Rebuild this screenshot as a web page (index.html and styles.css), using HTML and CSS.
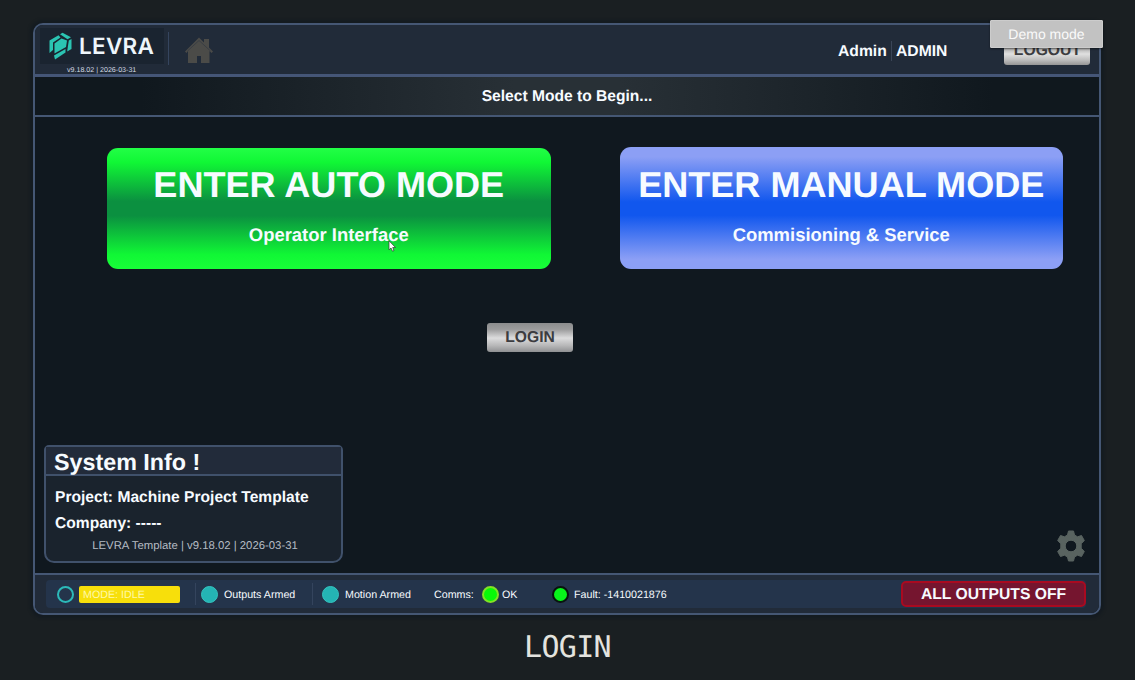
FILE: index.html
```html
<!DOCTYPE html>
<html lang="en">
<head>
<meta charset="utf-8">
<title>LEVRA</title>
<link rel="stylesheet" href="styles.css">
</head>
<body>
<div class="screen">
  <div class="frame">
    <header class="header">
      <div class="brand">
        <div class="brand-logo">
          <svg class="brand-mark" width="24" height="28" viewBox="0 0 24 28">
            <g fill="#2bc4b2">
              <path d="M.500 8.500 9.500 3.200 11.500 5.500 4 10.500V18L.500 21Z"/>
              <path d="M11 2.300 13.500 .800 22 5.200 18.500 7.200Z"/>
              <path d="M12.500 6.500 18 8.500 17 15 5.500 21.500V11.500Z"/>
              <path d="M19.800 8.500 22.500 7V17L18.200 19.500 18.800 15Z"/>
              <path d="M5 23.500 16.500 17V20.500L6 27.500Z"/>
            </g>
          </svg>
          <span class="brand-name">LEVRA</span>
        </div>
        <div class="brand-version">v9.18.02 | 2026-03-31</div>
      </div>
      <div class="divider"></div>
      <svg class="home" width="28" height="27" viewBox="0 0 28 27">
        <path fill="#4b4b48" d="M14 .500 19 5.500V2H24V10.500L28 14.500 26.500 16 24.500 14V26H16V19H12V26H3V14L1.500 16 0 14.500Z"/>
        <path fill="none" stroke="#343a42" stroke-width=".8" d="M2.500 14 14 3.500 25.500 14"/>
      </svg>
      <div class="user">
        <span class="user-name">Admin</span>
        <span class="user-role">ADMIN</span>
      </div>
      <button class="metal logout">LOGOUT</button>
    </header>
    <div class="titlebar">Select Mode to Begin...</div>
    <main class="main">
      <div class="modes">
        <button class="mode mode-auto">
          <span class="mode-title">ENTER AUTO MODE</span>
          <span class="mode-sub">Operator Interface</span>
        </button>
        <button class="mode mode-manual">
          <span class="mode-title">ENTER MANUAL MODE</span>
          <span class="mode-sub">Commisioning &amp; Service</span>
        </button>
      </div>
      <button class="metal login">LOGIN</button>
      <div class="bottom">
        <section class="info">
          <h2 class="info-head">System Info !</h2>
          <p class="info-line">Project: Machine Project Template</p>
          <p class="info-line info-company">Company: -----</p>
          <p class="info-version">LEVRA Template | v9.18.02 | 2026-03-31</p>
        </section>
        <svg class="gear" width="28" height="32" viewBox="0 0 28 32">
          <path fill="#596360" stroke="#596360" stroke-linejoin="round" fill-rule="evenodd" d="M11.500 1H16.500L17.500 5 20.500 6.800 24.500 5.500 27.300 10.500 24.200 13.800V18.200L27.300 21.500 24.500 26.500 20.500 25.200 17.500 27 16.500 31H11.500L10.500 27 7.500 25.200 3.500 26.500 .700 21.500 3.800 18.200V13.800L.700 10.500 3.500 5.500 7.500 6.800 10.500 5ZM14 10.200A5.800 5.800 0 1 0 14 21.800 5.800 5.800 0 1 0 14 10.200Z"/>
        </svg>
      </div>
    </main>
    <footer class="footer">
      <div class="status">
        <span class="lamp lamp-idle"></span>
        <span class="mode-tag">MODE: IDLE</span>
        <span class="sep"></span>
        <span class="lamp lamp-on"></span>
        <span class="label outputs">Outputs Armed</span>
        <span class="sep"></span>
        <span class="lamp lamp-on lamp-motion"></span>
        <span class="label motion">Motion Armed</span>
        <span class="label comms">Comms:</span>
        <span class="lamp lamp-comms"></span>
        <span class="label ok">OK</span>
        <span class="lamp lamp-fault"></span>
        <span class="label fault">Fault: -1410021876</span>
        <button class="outputs-off">ALL OUTPUTS OFF</button>
      </div>
    </footer>
  </div>
  <div class="caption">LOGIN</div>
  <div class="demo">Demo mode</div>
  <svg class="cursor" width="8" height="12" viewBox="0 0 8 12">
    <path fill="#fff" stroke="#333" stroke-width=".7" d="M1 .800V9.800L3 8 4.500 11.200 6 10.500 4.700 7.500H7.500Z"/>
  </svg>
</div>
</body>
</html>
```
FILE: styles.css
```css
* { box-sizing: border-box; }
body {
  margin: 0;
  background: #1a1f22;
  color: #f7fbff;
  font-family: "Liberation Sans", Arial, sans-serif;
  text-rendering: geometricPrecision;
}
button { border: 0; padding: 0; font: inherit; color: inherit; text-rendering: inherit; }
.screen { position: relative; width: 1135px; height: 680px; padding: 23px 0 0 33px; overflow: hidden; }
.frame {
  width: 1068px;
  height: 592px;
  display: flex;
  flex-direction: column;
  border: 2px solid #455774;
  border-radius: 10px;
  background: #10181f;
  box-shadow: 0 0 3px 3px #141b21;
}
.header {
  flex: none;
  display: flex;
  height: 52px;
  padding-left: 5px;
  background: #212b39;
  border-bottom: 3px solid #455677;
  border-radius: 8px 8px 0 0;
}
.brand { width: 124px; padding-top: 3px; }
.brand-logo { display: flex; align-items: center; height: 36px; background: #1a2430; padding-left: 9px; }
.brand-mark { margin-top: -1px; }
.brand-name { margin-left: 6px; padding-top: 1px; font: 600 22.500px/36px Inter, sans-serif; letter-spacing: .300px; color: #eef6fb; }
.brand-version { margin: 1px 0 0 27px; font-size: 7.100px; line-height: 11px; white-space: nowrap; color: #d5dce5; }
.divider { width: 1px; height: 33px; margin: 7px 0 0 4px; background: #35455e; }
.home { margin: 12px 0 0 16px; }
.user { display: flex; margin: 16px 0 0 625px; height: 20px; font-weight: bold; font-size: 15.700px; line-height: 21px; }
.user-name { width: 54px; border-right: 1px solid #3a4557; }
.user-role { margin-left: 4px; }
.metal {
  border-radius: 3px;
  color: #3c3c40;
  font-weight: bold;
  font-size: 15.700px;
  padding-top: 1px;
  background: linear-gradient(#8b8c8d, #9b9b9c 22%, #dcdcdd 52%, #b7b7b8 78%, #8f9092);
}
.logout { width: 86px; height: 29px; margin: 11px 0 0 57px; background: linear-gradient(#999, #aaa 40%, #e0e0e0 62%, #bebebe 82%, #959595); }
.titlebar {
  flex: none;
  width: 1066px;
  height: 40px;
  border: solid #455774;
  border-width: 0 2px 2px 0;
  background: linear-gradient(90deg, #10181e 10%, #283036 45%, #283036 55%, #10181e 90%);
  text-align: center;
  font-weight: bold;
  font-size: 15.600px;
  line-height: 40px;
}
.main { flex: 1; display: flex; flex-direction: column; padding: 29.500px 14px 9px 9px; }
.modes { display: flex; height: 123px; gap: 69px; padding-left: 63px; }
.mode { width: 443.500px; height: 122px; border-radius: 11px; display: flex; flex-direction: column; align-items: center; }
.mode-auto { height: 121px; margin-top: 1.500px; background: linear-gradient(#22ff46, #10f735 12%, #0b9040 44%, #0b9040 56%, #10f735 88%, #18ff38); }
.mode-manual { background: linear-gradient(#8c9ff5 8%, #1157ee 45%, #1157ee 56%, #8c9ff5 92%); }
.mode-title { margin-top: 17px; font-weight: bold; font-size: 36.100px; line-height: 42px; white-space: nowrap; }
.mode-sub { margin-top: 17px; font-weight: bold; font-size: 18.450px; line-height: 23px; }
.mode-auto .mode-title { margin-top: 15.500px; }
.login { width: 86px; height: 29px; margin: 53.500px 0 0 443px; }
.bottom { display: flex; justify-content: space-between; align-items: flex-end; margin-top: auto; padding-bottom: 1px; }
.info { width: 299px; height: 118px; border: 2px solid #40516b; border-radius: 5px 5px 10px 10px; background: #1a232d; }
.info-head { margin: 0; height: 29px; padding-left: 8px; background: #222b3a; border-bottom: 2px solid #40516b; font-size: 23.300px; line-height: 30px; }
.info-line { margin: 11px 0 0 9px; font-weight: bold; font-size: 15.600px; line-height: 21px; white-space: nowrap; }
.info-company { margin-top: 5px; }
.info-version { margin: 4px 0 0; padding-left: 3px; text-align: center; font-size: 11.350px; line-height: 16px; color: #b5bcc4; }
.gear { margin-bottom: 1px; }
.footer { flex: none; height: 40px; padding: 5px 13px 0 11px; background: #212b39; border-top: 2px solid #455774; border-radius: 0 0 8px 8px; }
.status { display: flex; align-items: center; height: 28px; padding-left: 11px; background: #24344b; border-radius: 4px; font-size: 10.700px; }
.lamp { flex: none; width: 17px; height: 17px; border-radius: 50%; }
.lamp-idle { border: 2px solid #2cb9b9; }
.lamp-on { margin-left: 5px; background: #24b4b4; border: 1px solid #34c4c0; }
.lamp-motion { margin-left: 9px; }
.lamp-comms { margin-left: 8px; background: #08f808; border: 2px solid #83e126; }
.lamp-fault { margin-left: 34px; background: #08f41b; border: 2px solid #09140e; }
.mode-tag { width: 101px; height: 17px; margin: 1px 15px 0 5px; padding: 1px 0 0 4px; border-radius: 2px; background: #f7df0b; color: #fff9a8; line-height: 17px; }
.sep { width: 1px; height: 22px; background: #34445d; }
.label { white-space: nowrap; line-height: 14px; padding-top: 1px; }
.outputs { width: 88px; margin-left: 6px; }
.motion { width: 83px; margin-left: 6px; }
.comms { width: 40px; margin-left: 6px; }
.ok { width: 16px; margin-left: 3px; }
.fault { margin-left: 5px; }
.outputs-off { width: 185px; height: 26px; margin-left: auto; padding-top: 1px; border: 2px solid #a90a20; border-radius: 5px; background: #75152f; font-weight: bold; font-size: 15.700px; }
.caption { width: 1069px; margin-top: 14px; font: 30px/38px "DejaVu Sans Mono", monospace; letter-spacing: -.700px; text-align: center; color: #e3e3df; }
.demo {
  position: absolute;
  left: 990px;
  top: 20px;
  width: 113px;
  height: 28px;
  border: 1px solid #ccc;
  border-radius: 1px;
  background: #c2c2c2;
  box-shadow: 0 1px 2px rgba(0, 0, 0, .5);
  color: #fafafa;
  font-size: 14px;
  line-height: 26px;
  text-align: center;
}
.cursor { position: absolute; left: 388px; top: 240px; }
```
